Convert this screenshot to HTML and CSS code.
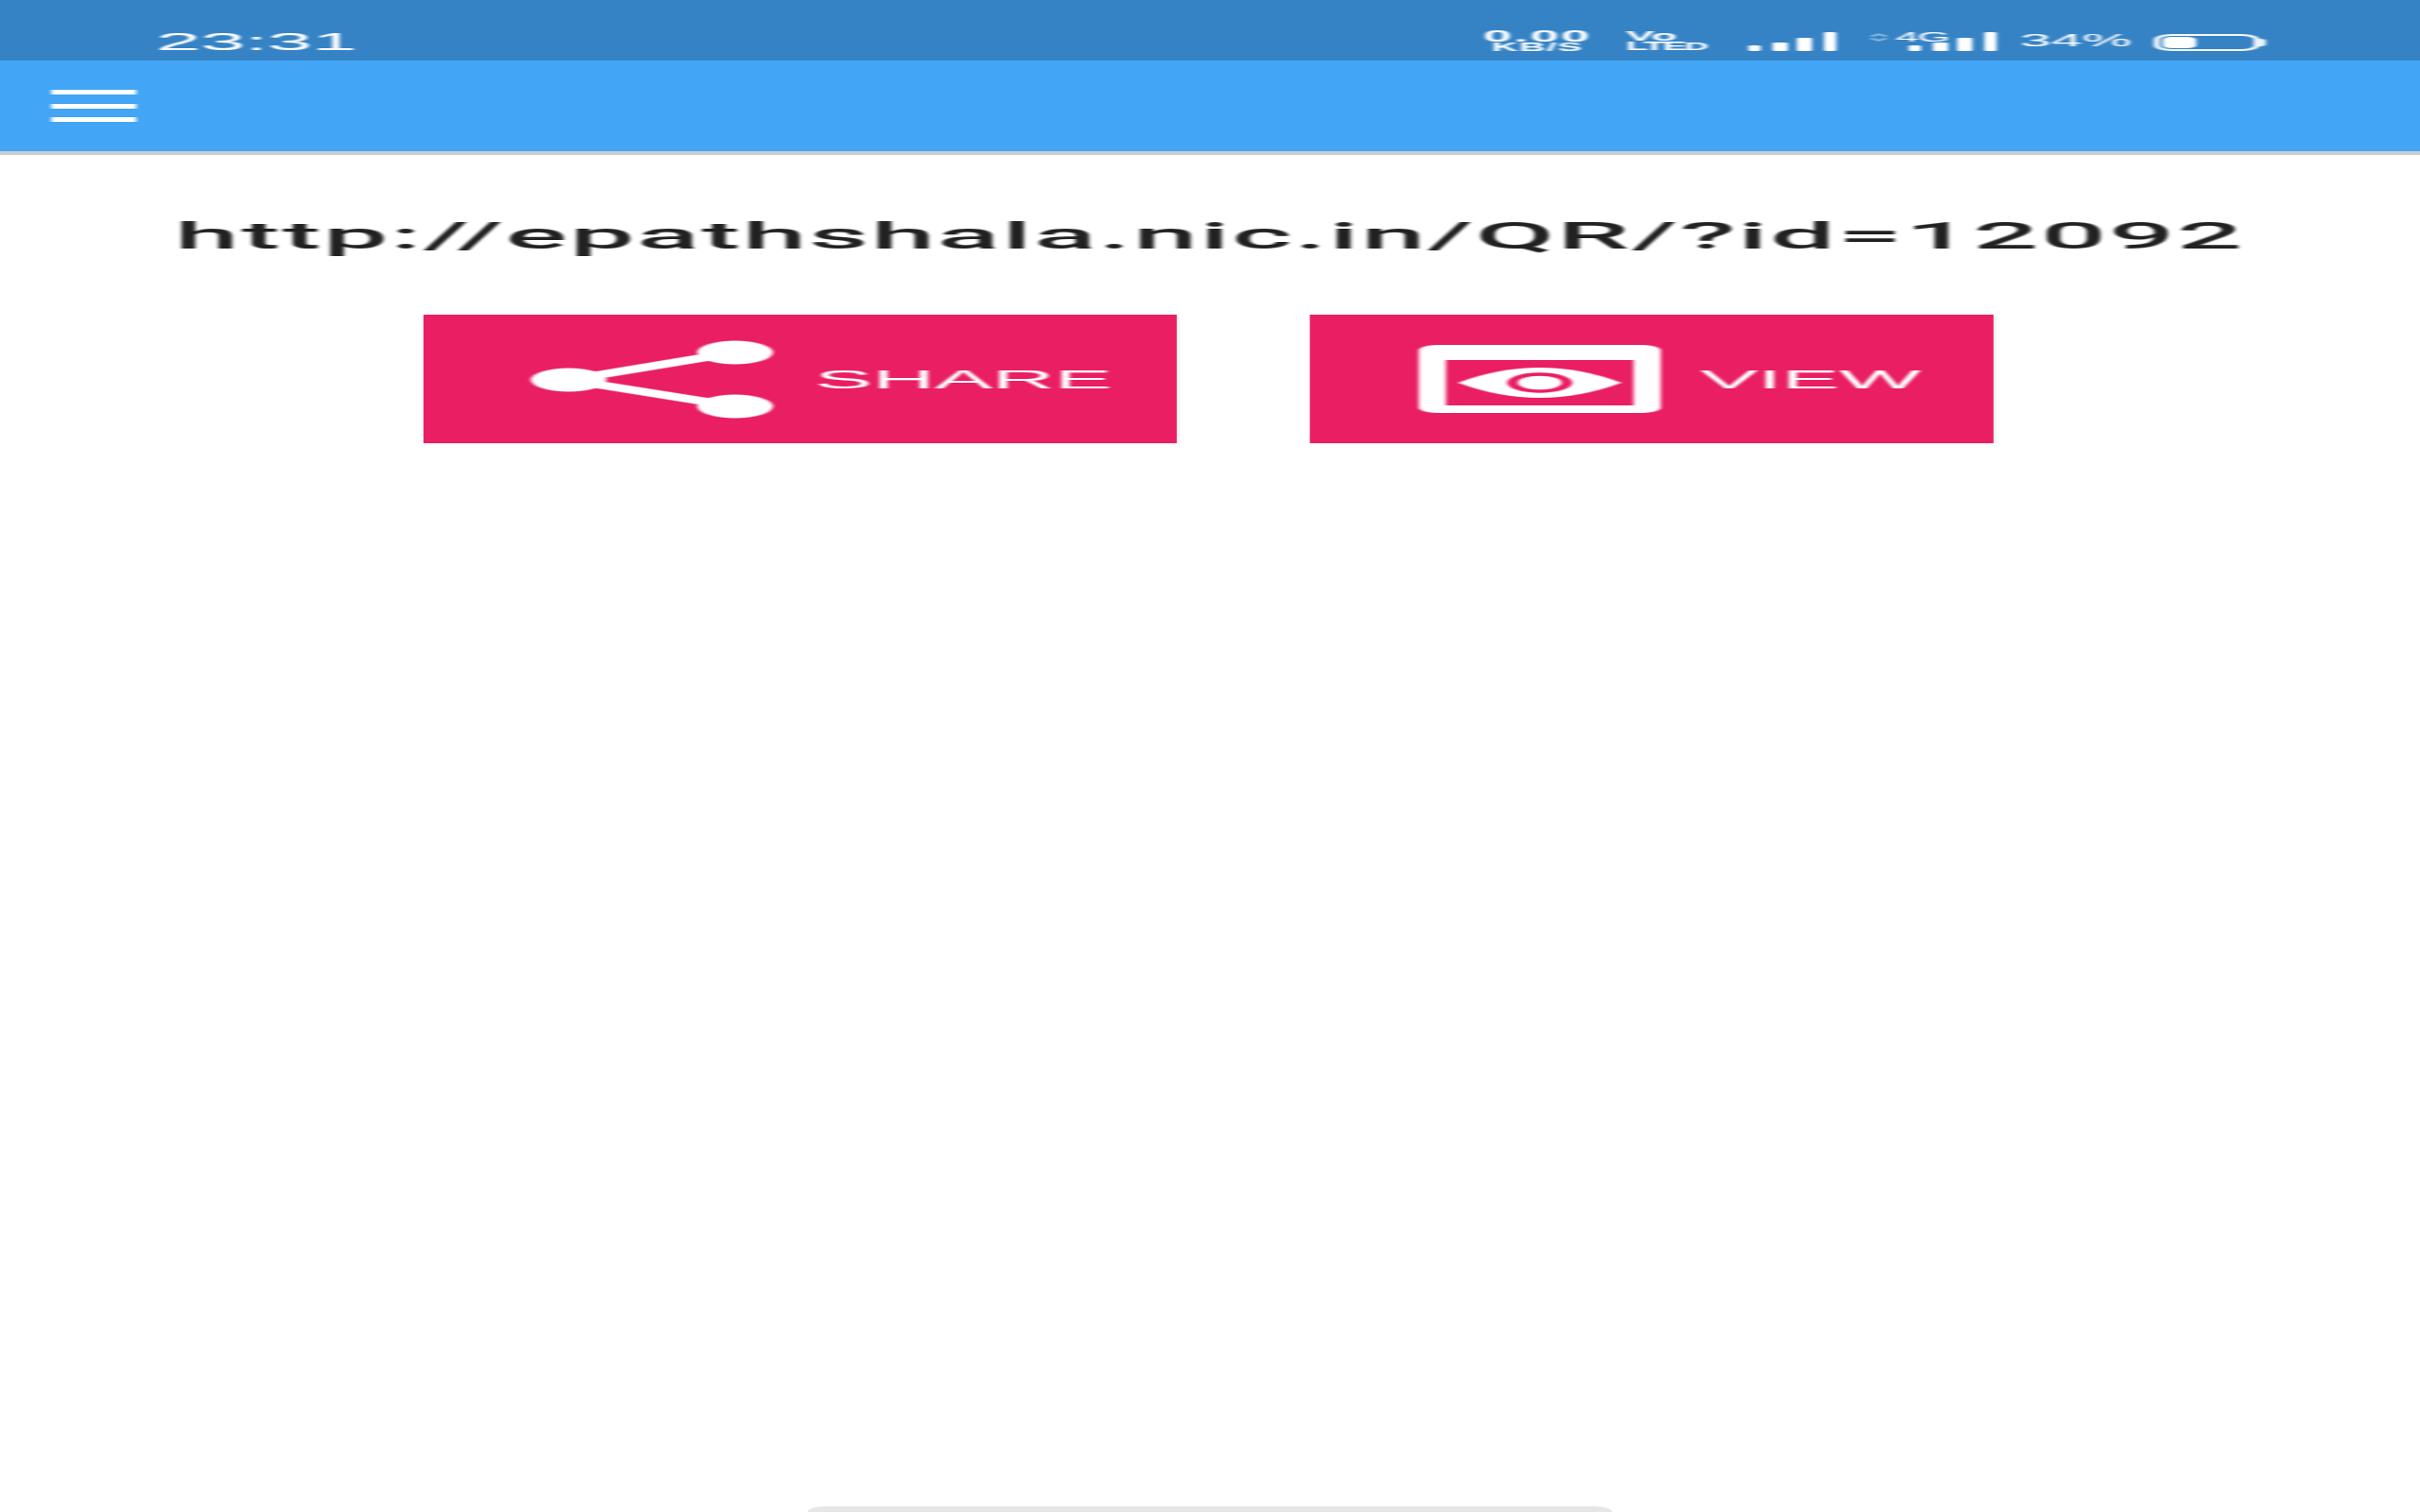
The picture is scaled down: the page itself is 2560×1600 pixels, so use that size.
FILE: index.html
```html
<!DOCTYPE html>
<html lang="en">

<head>
    <meta charset="UTF-8">
    <title>QR Link</title>
    <link rel="stylesheet" href="styles.css">
</head>

<body>
    <div class="screen">
        <div class="status">
            <span class="time soft">23:31</span>
            <div class="status-right soft">
                <div class="speed">
                    <span class="speed-num">0.00</span>
                    <span class="speed-unit">KB/S</span>
                </div>
                <div class="volte">
                    <span class="volte-top">Vo</span>
                    <span>LTE<b class="volte-d">D</b></span>
                </div>
                <div class="signal sim1">
                    <i class="bar b1"></i><i class="bar b2"></i><i class="bar b3"></i><i class="bar b4"></i>
                </div>
                <svg class="updown" viewBox="0 0 6 9">
                    <path d="M.5 3.500 3 1l2.500 2.500M.5 5.500 3 8l2.500-2.500" fill="none" stroke="#fff" stroke-opacity=".5" stroke-width="1.200" />
                </svg>
                <span class="net">4G</span>
                <div class="signal">
                    <i class="bar b1"></i><i class="bar b2"></i><i class="bar b3"></i><i class="bar b4"></i>
                </div>
                <span class="percent">34%</span>
                <div class="battery">
                    <div class="battery-body">
                        <div class="battery-level"></div>
                    </div>
                    <div class="battery-nub"></div>
                </div>
            </div>
        </div>

        <div class="header">
            <a href="#" class="menu soft">
                <span></span>
                <span></span>
                <span></span>
            </a>
        </div>

        <div class="content">
            <p class="link soft">http://epathshala.nic.in/QR/?id=12092</p>
            <div class="actions">
                <button class="btn btn-share">
                    <svg class="btn-icon soft" viewBox="0 0 80 81">
                        <path d="M13 41 68 12M13 41 68 69" fill="none" stroke="#fff" stroke-width="7.500" />
                        <circle cx="13" cy="41" r="12.500" fill="#fff" />
                        <circle cx="68" cy="12" r="12.500" fill="#fff" />
                        <circle cx="68" cy="69" r="12.500" fill="#fff" />
                    </svg>
                    <span class="soft">SHARE</span>
                </button>
                <button class="btn btn-view">
                    <svg class="btn-icon soft" viewBox="0 0 80 72">
                        <path fill="#fff" fill-rule="evenodd" d="M6 0h68a6 6 0 0 1 6 6v60a6 6 0 0 1-6 6H6a6 6 0 0 1-6-6V6a6 6 0 0 1 6-6ZM9 16v48h62V16Z" />
                        <path fill="#fff" d="M13 40Q40 8 67 40 40 72 13 40Z" />
                        <circle cx="40" cy="40" r="9" fill="none" stroke="#e91e63" stroke-width="3.500" />
                    </svg>
                    <span class="soft">VIEW</span>
                </button>
            </div>
        </div>

        <div class="home-bar"></div>
    </div>
</body>

</html>
```

FILE: styles.css
```css
html,
body {
    margin: 0;
    padding: 0;
    overflow: hidden;
    background: #fff;
}

/* the whole capture is wider than it is tall, layout is in 800px units */
.screen {
    display: flex;
    flex-direction: column;
    width: 800px;
    height: 1600px;
    transform: scaleX(3.2);
    transform-origin: left top;
    font-family: "Liberation Sans", Arial, sans-serif;
}

.soft {
    filter: blur(0.6px);
}

/****STATUS BAR****/

.status {
    display: flex;
    align-items: flex-end;
    height: 64px;
    padding-left: 51.600px;
    padding-bottom: 10px;
    box-sizing: border-box;
    background: #3583c5;
    color: #fff;
}

.time {
    font-size: 26.500px;
    line-height: 20px;
    margin-bottom: 0.5px;
}

.status-right {
    display: flex;
    align-items: flex-end;
    margin-left: auto;
    padding-right: 51px;
}

.speed,
.volte {
    display: flex;
    flex-direction: column;
    font-weight: bold;
}

.speed {
    width: 35.400px;
    align-items: center;
    margin-bottom: -1px;
}

.speed-num {
    font-size: 17px;
    line-height: 13px;
    letter-spacing: 0.7px;
}

.speed-unit {
    font-size: 12px;
    line-height: 10px;
    letter-spacing: 0.4px;
}

.volte {
    width: 26px;
    margin-left: 11.600px;
    font-size: 12px;
    line-height: 10.500px;
    letter-spacing: -0.8px;
}

.volte-top {
    font-size: 14px;
    letter-spacing: 0;
}

.volte-d {
    font-size: 11px;
}

.signal {
    display: flex;
    align-items: flex-end;
    gap: 3.800px;
    margin-bottom: 0.5px;
}

.sim1 {
    margin-left: 14.100px;
}

.bar {
    display: block;
    width: 4.600px;
    background: #fff;
    border-radius: 1px;
}

.b1 {
    height: 5.500px;
}

.b2 {
    height: 8.500px;
}

.b3 {
    height: 13.500px;
}

.b4 {
    height: 19.500px;
}

.updown {
    width: 6.200px;
    height: 9px;
    margin-left: 11px;
    margin-bottom: 10px;
}

.net {
    width: 17px;
    margin-left: 2px;
    margin-right: -13px;
    margin-bottom: 9px;
    font-size: 14px;
    line-height: 11px;
    letter-spacing: -0.5px;
}

.percent {
    width: 36.600px;
    margin-left: 7.400px;
    margin-bottom: 4px;
    font-size: 18.500px;
    line-height: 14px;
}

.battery {
    display: flex;
    align-items: center;
    margin-left: 7.200px;
}

.battery-body {
    width: 35.300px;
    height: 18px;
    padding: 2px 2px;
    box-sizing: border-box;
    border: 2px solid #f4f8fb;
    border-radius: 6px;
}

.battery-level {
    width: 11.600px;
    height: 100%;
    margin-top: -1px;
    margin-left: -1px;
    padding-bottom: 2px;
    background: #fff;
    border-radius: 3px;
}

.battery-nub {
    width: 2.200px;
    height: 8px;
    background: #f4f8fb;
    border-radius: 0 3px 3px 0;
}

/****HEADER****/

.header {
    display: flex;
    align-items: center;
    height: 96px;
    padding-left: 16.600px;
    box-sizing: content-box;
    background: #42a5f5;
    border-bottom: 4px solid #ccc;
}

.menu {
    display: flex;
    flex-direction: column;
    gap: 9.500px;
    width: 28.600px;
}

.menu span {
    height: 5px;
    background: #fff;
}

/****CONTENT****/

.content {
    padding-top: 64px;
}

.link {
    margin: 0;
    font-family: Roboto, "Liberation Sans", sans-serif;
    font-size: 38px;
    font-weight: 500;
    line-height: 44px;
    letter-spacing: 0.88px;
    text-align: center;
    color: #212121;
}

.actions {
    display: flex;
    justify-content: center;
    gap: 43.600px;
    margin-top: 61px;
    padding-right: 1px;
}

.btn {
    display: flex;
    align-items: center;
    height: 136px;
    padding: 0 0 0 35px;
    border: 0;
    background: #e91e63;
    color: #fff;
    font-family: inherit;
    font-size: 28.500px;
    box-shadow: 1px 0 2px rgba(0, 0, 0, 0.08);
}

.btn-share {
    width: 248.600px;
    gap: 14px;
}

.btn-view {
    width: 226px;
    padding-left: 36px;
    gap: 13.500px;
}

.btn-icon {
    flex: none;
    width: 80px;
    overflow: visible;
}

.btn-share .btn-icon {
    height: 81px;
}

.btn-view .btn-icon {
    height: 72px;
}

/****BOTTOM BAR****/

.home-bar {
    align-self: center;
    width: 266.600px;
    height: 6px;
    margin-top: auto;
    background: #e6e6e6;
    border-radius: 6px 6px 0 0;
}
```
